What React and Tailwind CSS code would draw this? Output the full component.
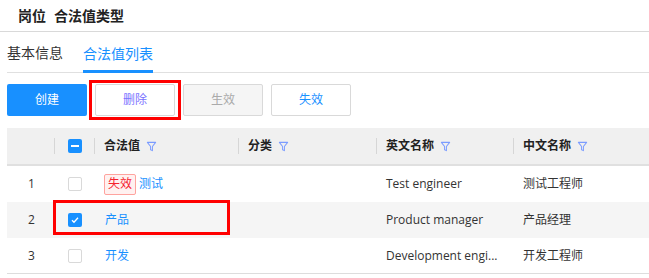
import React from 'react';

const FONT = { fontFamily: '"Open Sans", "Noto Sans CJK SC", sans-serif' };

function Filter() {
  return (
    <svg width="11" height="11" viewBox="0 0 12 12" className="ml-1.5 shrink-0">
      <path d="M1.5 1.5h9L7 6v4.5L5 9.5V6z" fill="none" stroke="#7b9cff" strokeWidth="1.1" strokeLinejoin="round" />
    </svg>
  );
}

function Box({ checked }) {
  if (checked) {
    return (
      <span className="w-[14px] h-[14px] rounded-[2px] bg-[#1890ff] flex items-center justify-center">
        <svg width="10" height="10" viewBox="0 0 10 10">
          <path d="M2 5.2l2 2 4-4.4" fill="none" stroke="#fff" strokeWidth="1.3" />
        </svg>
      </span>
    );
  }
  return <span className="w-[14px] h-[14px] rounded-[2px] border border-[#d9d9d9] bg-white" />;
}

const rows = [
  { n: 1, tag: true, val: '测试', en: 'Test engineer', cn: '测试工程师' },
  { n: 2, checked: true, val: '产品', en: 'Product manager', cn: '产品经理' },
  { n: 3, val: '开发', en: 'Development engi...', cn: '开发工程师' },
];

export default function App() {
  return (
    <div className="w-[649px] h-[278px] bg-white overflow-hidden text-[#333]" style={FONT}>
      {/* title */}
      <div className="h-[32px] border-b border-[#d9d9d9] flex items-center pl-[18px] text-[14px] font-bold text-[#222]">
        <span>岗位</span>
        <span className="ml-[8px]">合法值类型</span>
      </div>

      {/* tabs */}
      <div className="ml-[7px] h-[41px] border-b border-[#e0e0e0] flex items-end text-[14px]">
        <div className="h-full flex items-center">基本信息</div>
        <div className="ml-[20px] h-full flex items-center text-[#1890ff] border-b-[3px] border-[#1890ff] pt-[3px] -mb-px">
          合法值列表
        </div>
      </div>

      {/* buttons */}
      <div className="ml-[7px] mt-[11px] flex gap-[8px] text-[12px]">
        <button className="w-[80px] h-[32px] rounded-[2px] bg-[#1890ff] text-white">创建</button>
        <div className="relative">
          <button className="w-[80px] h-[32px] rounded-[2px] border border-[#d9d9d9] bg-white text-[#7a72ff]">删除</button>
          <span className="absolute -left-[6px] -top-[4px] w-[92px] h-[40px] border-[3px] border-[#f00] pointer-events-none" />
        </div>
        <button className="w-[80px] h-[32px] rounded-[2px] border border-[#d9d9d9] bg-[#f5f5f5] text-[#aaa]">生效</button>
        <button className="w-[80px] h-[32px] rounded-[2px] border border-[#d9d9d9] bg-white text-[#1890ff]">失效</button>
      </div>

      {/* table */}
      <div className="ml-[7px] mt-[12px] text-[12px]">
        <div className="h-[38px] bg-[#f0f0f0] border-b-2 border-[#e0e0e0] grid grid-cols-[48px_40px_144px_138px_137px_135px] items-center font-bold text-[#222]">
          <div className="h-[16px] border-r border-[#d6d6d6]" />
          <div className="flex items-center justify-center h-[16px] border-r border-[#d6d6d6]">
            <span className="w-[14px] h-[14px] rounded-[2px] bg-[#1890ff] flex items-center justify-center">
              <span className="w-[8px] h-[2px] bg-white" />
            </span>
          </div>
          <div className="flex items-center pl-[9px] h-[16px] border-r border-[#d6d6d6]">合法值<Filter /></div>
          <div className="flex items-center pl-[9px] h-[16px] border-r border-[#d6d6d6]">分类<Filter /></div>
          <div className="flex items-center pl-[9px] h-[16px] border-r border-[#d6d6d6]">英文名称<Filter /></div>
          <div className="flex items-center pl-[9px] h-[16px]">中文名称<Filter /></div>
        </div>
        {rows.map((r) => (
          <div
            key={r.n}
            className={`relative h-[36px] grid grid-cols-[48px_40px_144px_138px_137px_135px] items-center ${r.checked ? 'bg-[#f5f5f5]' : 'bg-white'} ${r.n === 3 ? 'border-b border-[#ddd]' : ''}`}
          >
            <div className="pl-[21px]">{r.n}</div>
            <div className="flex justify-center"><Box checked={r.checked} /></div>
            <div className="flex items-center pl-[9px] text-[#1890ff]">
              {r.tag && (
                <span className="mr-[3px] px-[3px] h-[21px] flex items-center border border-[#ffa39e] bg-[#fff1f0] text-[#f5222d] rounded-[2px]">失效</span>
              )}
              <span className={r.tag ? '' : 'pl-[1px]'}>{r.val}</span>
            </div>
            <div />
            <div className="pl-[9px] whitespace-nowrap">{r.en}</div>
            <div className="pl-[9px]">{r.cn}</div>
            {r.checked && (
              <span className="absolute left-[46px] top-[-2px] w-[177px] h-[35px] border-[3px] border-[#f00] pointer-events-none" />
            )}
          </div>
        ))}
      </div>
    </div>
  );
}
